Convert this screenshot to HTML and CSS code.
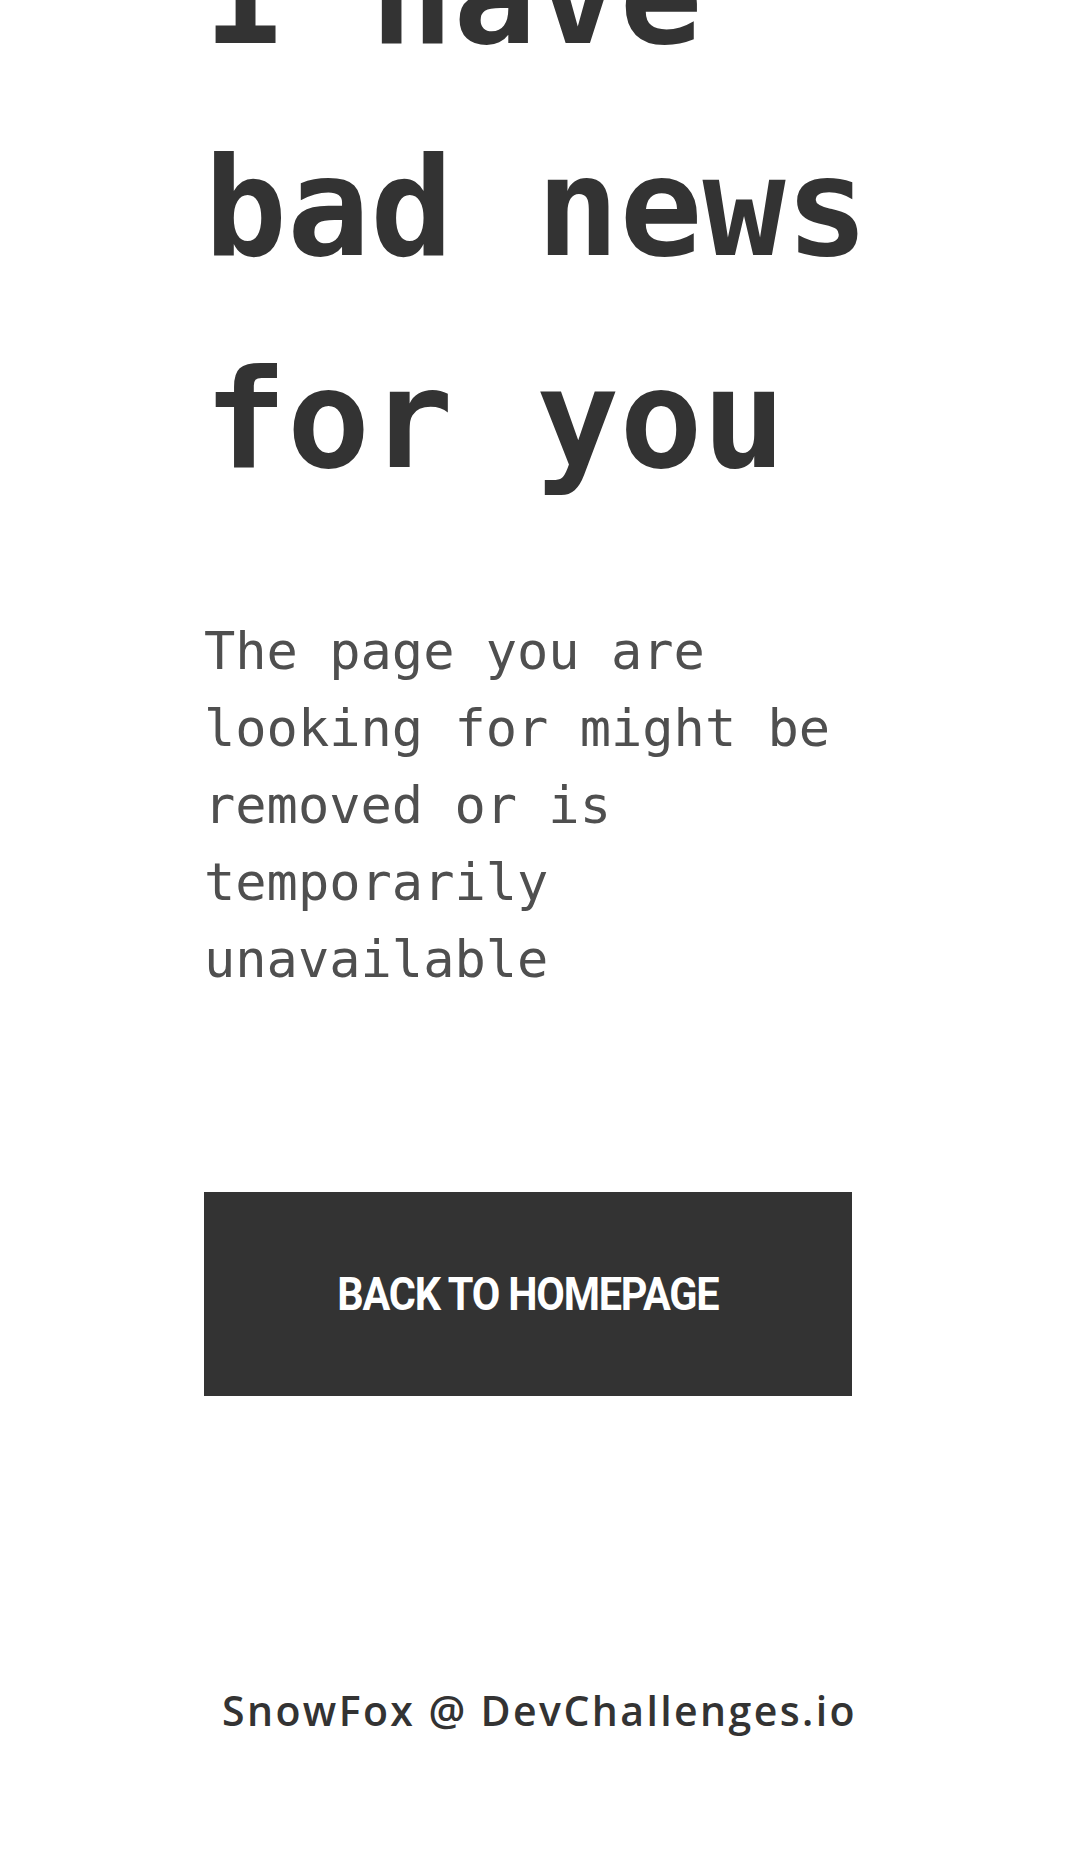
FILE: index.html
```html
<!DOCTYPE html>
<html lang="en">
<head>
<meta charset="utf-8">
<title>404 - I have bad news for you</title>
<link rel="stylesheet" href="styles.css">
</head>
<body>
<main class="content">
  <h1 class="title">I have bad news for you</h1>
  <p class="message">The page you are looking for might be removed or is temporarily unavailable</p>
  <a class="home-btn" href="#"><span class="home-btn-label">BACK TO HOMEPAGE</span></a>
</main>
<footer class="credits">SnowFox @ DevChallenges.io</footer>
</body>
</html>
```

FILE: styles.css
```css
html, body {
  margin: 0;
  padding: 0;
  background: #ffffff;
}

body {
  overflow: hidden;
  height: 1852px;
}

.content {
  width: 700px;
  margin-left: 204px;
  display: flex;
  flex-direction: column;
}

.title {
  margin: -110px 0 0 0;
  font-family: "DejaVu Sans Mono", "Liberation Mono", monospace;
  font-weight: 700;
  font-size: 138px;
  line-height: 212px;
  color: #333333;
}

.message {
  margin: 87px 0 0 0;
  width: 680px;
  font-family: "DejaVu Sans Mono", "Liberation Mono", monospace;
  font-weight: 400;
  font-size: 52px;
  line-height: 77px;
  color: #4f4f4f;
}

.home-btn {
  margin-top: 194px;
  width: 648px;
  height: 204px;
  background: #333333;
  color: #ffffff;
  display: flex;
  align-items: center;
  justify-content: center;
  text-decoration: none;
}

.home-btn-label {
  display: inline-block;
  font-family: "Roboto", "Liberation Sans", sans-serif;
  font-weight: 700;
  font-size: 46px;
  letter-spacing: -1.3px;
  transform: scaleX(0.9);
}

.credits {
  margin-top: 286px;
  text-align: center;
  font-family: "Open Sans", "Liberation Sans", sans-serif;
  font-weight: 600;
  font-size: 41px;
  letter-spacing: 2.4px;
  color: #333333;
}
```
